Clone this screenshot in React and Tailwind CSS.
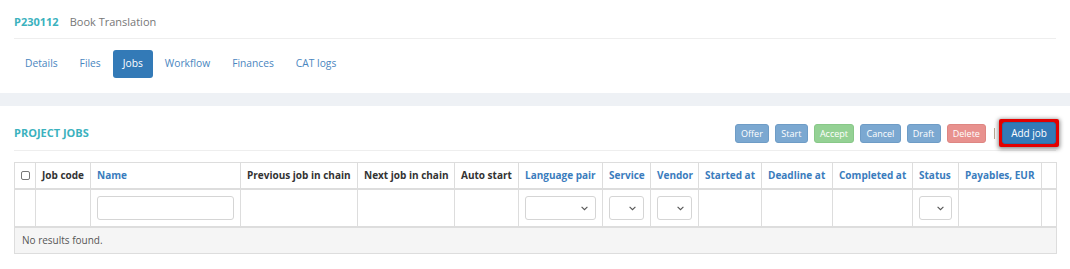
import { useState } from 'react';

// ─── Data ─────────────────────────────────────────────────────────────────────
const TABS = ['Details', 'Files', 'Jobs', 'Workflow', 'Finances', 'CAT logs'];

const ACTIONS = [
  { label: 'Offer', cls: 'bg-[#7ba8d1] border-[#6e9cc6]' },
  { label: 'Start', cls: 'bg-[#7ba8d1] border-[#6e9cc6]' },
  { label: 'Accept', cls: 'bg-[#94d194] border-[#88c888]' },
  { label: 'Cancel', cls: 'bg-[#7ba8d1] border-[#6e9cc6]' },
  { label: 'Draft', cls: 'bg-[#7ba8d1] border-[#6e9cc6]' },
  { label: 'Delete', cls: 'bg-[#e8918e] border-[#de8682]' },
];

const COLUMNS = [
  { key: 'check', w: 'w-[21px]' },
  { key: 'code', label: 'Job code', w: 'w-[55px]' },
  { key: 'name', label: 'Name', w: 'w-[150px]', link: true, filter: 'input' },
  { key: 'prev', label: 'Previous job in chain', w: 'w-[117px]' },
  { key: 'next', label: 'Next job in chain', w: 'w-[97px]' },
  { key: 'auto', label: 'Auto start', w: 'w-[64px]' },
  { key: 'lang', label: 'Language pair', w: 'w-[84px]', link: true, filter: 'select' },
  { key: 'service', label: 'Service', w: 'w-[48px]', link: true, filter: 'select' },
  { key: 'vendor', label: 'Vendor', w: 'w-[48px]', link: true, filter: 'select' },
  { key: 'started', label: 'Started at', w: 'w-[63px]', link: true },
  { key: 'deadline', label: 'Deadline at', w: 'w-[71px]', link: true },
  { key: 'completed', label: 'Completed at', w: 'w-[80px]', link: true },
  { key: 'status', label: 'Status', w: 'w-[46px]', link: true, filter: 'select' },
  { key: 'payables', label: 'Payables, EUR', w: 'w-[83px]', link: true },
  { key: 'extra', w: 'w-[15px]' },
];

// ─── Filter select ────────────────────────────────────────────────────────────
function FilterSelect() {
  return (
    <div className="relative h-[24px]">
      <select className="h-[24px] w-full appearance-none rounded-[3px] border border-[#d5d5d5] bg-white" />
      <svg
        className="pointer-events-none absolute right-[8px] top-[10px]"
        width="7" height="5" viewBox="0 0 7 5" fill="none"
      >
        <path d="M0.6 0.8 L3.5 3.7 L6.4 0.8" stroke="#555" strokeWidth="1.1" />
      </svg>
    </div>
  );
}

// ─── Main Component ───────────────────────────────────────────────────────────
export default function App() {
  const [tab, setTab] = useState('Jobs');
  const [name, setName] = useState('');

  return (
    <div className="min-h-[269px] bg-white text-[#333] font-['Open_Sans',sans-serif]">
      {/* Project header */}
      <div className="px-[14px]">
        <div className="flex h-[39px] items-center gap-[11px] border-b border-[#eeeeee] pt-[6px] text-[11px] leading-[16px]">
          <span className="font-bold text-[#3bb2be]">P230112</span>
          <span className="text-[#777]">Book Translation</span>
        </div>
        <div className="flex gap-[2px] pb-[15px] pl-px pt-[11px]">
          {TABS.map((t) => (
            <button
              key={t}
              onClick={() => setTab(t)}
              className={`h-[28px] rounded-[3px] px-[10px] text-[10.25px] ${
                tab === t ? 'bg-[#337ab7] text-white' : 'text-[#4a86c0]'
              }`}
            >
              {t}
            </button>
          ))}
        </div>
      </div>

      <div className="h-[13px] bg-[#eef1f5]" />

      {/* Project jobs */}
      <div className="px-[14px] pt-[13px]">
        <div className="box-content flex h-[28px] items-center justify-between border-b border-[#eeeeee] pb-[3px]">
          <div className="pt-px text-[11px] font-bold uppercase text-[#3bb2be]">Project jobs</div>
          <div className="flex items-center">
            <div className="flex items-center gap-[6px]">
              {ACTIONS.map((a) => (
                <button
                  key={a.label}
                  className={`h-[19px] rounded-[3px] border px-[5.25px] text-[9px] leading-[17px] text-white ${a.cls}`}
                >
                  {a.label}
                </button>
              ))}
            </div>
            <span className="ml-[8px] h-[11px] w-px bg-[#b9aa96]" />
            <span className="-mr-[3px] ml-[4px] flex rounded-[2px] bg-[#e30000] p-[3px] shadow-[0_1px_4px_1px_rgba(0,0,0,0.45)]">
              <button className="h-[22px] rounded-[3px] border border-[#2e6da4] bg-[#337ab7] px-[8px] text-[10px] text-white">
                Add job
              </button>
            </span>
          </div>
        </div>

        <table className="mt-[11px] w-[1042px] table-fixed border-collapse border border-[#dddddd] text-[10px]">
          <colgroup>
            {COLUMNS.map((c) => (
              <col key={c.key} className={c.w} />
            ))}
          </colgroup>
          <thead>
            <tr className="h-[26px] border-b-2 border-[#dddddd]">
              {COLUMNS.map((c) => (
                <th
                  key={c.key}
                  className={`border-x border-[#dddddd] px-[6px] text-left font-bold whitespace-nowrap ${
                    c.link ? 'text-[#3a7cbd]' : 'text-[#333]'
                  }`}
                >
                  {c.key === 'check' ? (
                    <span className="block h-[9px] w-[9px] rounded-[2px] border border-[#777] bg-white" />
                  ) : (
                    c.label
                  )}
                </th>
              ))}
            </tr>
            <tr className="h-[38px] border-b-2 border-[#dddddd]">
              {COLUMNS.map((c) => (
                <td key={c.key} className="border-x border-[#dddddd] px-[6px]">
                  {c.filter === 'input' && (
                    <input
                      value={name}
                      onChange={(e) => setName(e.target.value)}
                      className="block h-[24px] w-full rounded-[3px] border border-[#d5d5d5] bg-white"
                    />
                  )}
                  {c.filter === 'select' && <FilterSelect />}
                </td>
              ))}
            </tr>
          </thead>
          <tbody>
            <tr className="h-[27px] bg-[#f5f5f5]">
              <td colSpan={COLUMNS.length} className="px-[7px] text-[#555]">
                No results found.
              </td>
            </tr>
          </tbody>
        </table>
      </div>
    </div>
  );
}
